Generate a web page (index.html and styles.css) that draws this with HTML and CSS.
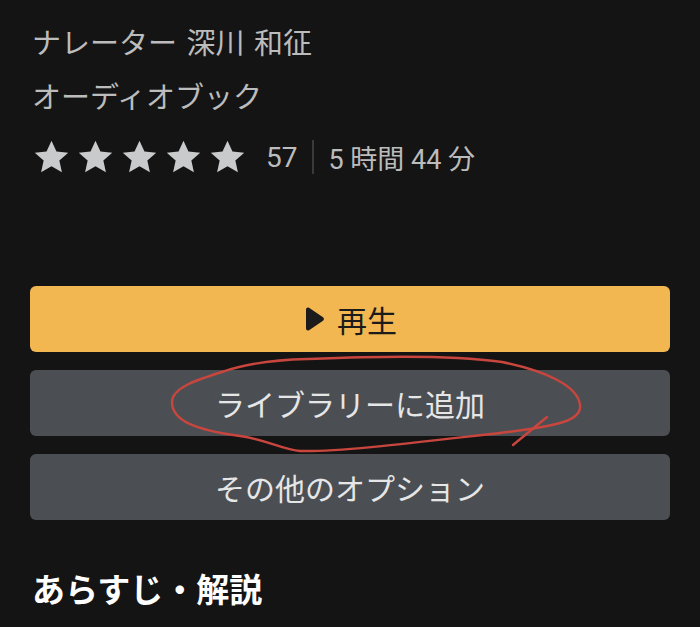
FILE: index.html
```html
<!DOCTYPE html>
<html lang="ja">
<head>
    <meta charset="UTF-8">
    <meta name="viewport" content="width=device-width, initial-scale=1.0">
    <title>オーディオブック</title>
    <link rel="stylesheet" href="styles.css">
</head>
<body>
    <div class="page">
        <div class="meta">
            <p class="meta-line">ナレーター 深川 和征</p>
            <p class="meta-line">オーディオブック</p>
            <div class="rating">
                <div class="stars">
                    <svg viewBox="0 0 24 24"><path d="M12 2.2l2.9 6.3 6.9.7-5.2 4.6 1.5 6.8L12 17.1 5.9 20.6l1.5-6.8L2.2 9.2l6.9-.7z"/></svg>
                    <svg viewBox="0 0 24 24"><path d="M12 2.2l2.9 6.3 6.9.7-5.2 4.6 1.5 6.8L12 17.1 5.9 20.6l1.5-6.8L2.2 9.2l6.9-.7z"/></svg>
                    <svg viewBox="0 0 24 24"><path d="M12 2.2l2.9 6.3 6.9.7-5.2 4.6 1.5 6.8L12 17.1 5.9 20.6l1.5-6.8L2.2 9.2l6.9-.7z"/></svg>
                    <svg viewBox="0 0 24 24"><path d="M12 2.2l2.9 6.3 6.9.7-5.2 4.6 1.5 6.8L12 17.1 5.9 20.6l1.5-6.8L2.2 9.2l6.9-.7z"/></svg>
                    <svg viewBox="0 0 24 24"><path d="M12 2.2l2.9 6.3 6.9.7-5.2 4.6 1.5 6.8L12 17.1 5.9 20.6l1.5-6.8L2.2 9.2l6.9-.7z"/></svg>
                </div>
                <span class="count">57</span>
                <span class="divider"></span>
                <span class="length">5 時間 44 分</span>
            </div>
        </div>

        <!-- Actions -->
        <div class="actions">
            <button class="btn btn-play">
                <svg class="play-icon" viewBox="0 0 22 24"><path d="M3 2.5c0-1.6 1.7-2.5 3-1.7l14 9.5c1.2.8 1.2 2.6 0 3.4L6 23.2c-1.3.8-3-.1-3-1.7z"/></svg>
                再生
            </button>
            <button class="btn btn-grey">ライブラリーに追加</button>
            <button class="btn btn-grey">その他のオプション</button>
        </div>

        <h2 class="section-title">あらすじ・解説</h2>
    </div>

    <!-- hand-drawn mark on top of the screenshot -->
    <svg class="scribble" viewBox="0 0 700 627" width="700" height="627">
        <path d="M307 359C270 360 242 365 222 372C196 380 172 388 172 402C172 421 196 430 240 436C268 440 283 450 300 451C340 452 420 442 500 433C560 426 582 420 580 405C578 386 546 371 502 362C442 354 362 357 307 359Z"/>
        <path d="M513 445L547 417"/>
    </svg>
</body>
</html>
```

FILE: styles.css
```css
body {
    margin: 0;
    padding: 0;
    background-color: #141414;
    font-family: "Noto Sans CJK JP", "Noto Sans", sans-serif;
    position: relative;
    overflow: hidden;
}

.page {
    padding: 14px 30px 0 30px;
}

.meta-line {
    margin: 0;
    font-size: 29px;
    line-height: 54px;
    color: #bcbcbc;
    padding-left: 2px;
    word-spacing: 3px;
}

.rating {
    display: flex;
    align-items: center;
    height: 54px;
    margin-top: 8px;
    padding-left: 1px;
    color: #bcbcbc;
}

.stars {
    display: flex;
    gap: 3px;
}

.stars svg {
    width: 41px;
    height: 41px;
    fill: #c9cacb;
}

.count {
    margin-left: 18px;
    font-family: Roboto, "Noto Sans", sans-serif;
    font-size: 28px;
}

.divider {
    width: 2px;
    height: 34px;
    background-color: #3a3a3a;
    margin: 0 14px 0 15px;
}

.length {
    font-size: 27px;
    font-family: Roboto, "Noto Sans CJK JP", sans-serif;
}

.actions {
    display: flex;
    flex-direction: column;
    gap: 18px;
    margin-top: 102px;
}

.btn {
    display: flex;
    align-items: center;
    justify-content: center;
    gap: 12px;
    height: 66px;
    width: 100%;
    border: none;
    border-radius: 6px;
    font-family: "Noto Sans CJK JP", sans-serif;
    font-size: 30px;
    padding: 0;
}

.btn-play {
    background-color: #f2b750;
    color: #1b1b1b;
}

.play-icon {
    width: 22px;
    height: 24px;
    fill: #1b1b1b;
}

.btn-grey {
    background-color: #4b4f53;
    color: #e6e6e6;
}

.section-title {
    margin: 46px 0 0 2px;
    font-size: 33px;
    font-weight: bold;
    color: #ffffff;
    line-height: 44px;
}

.scribble {
    position: absolute;
    top: 0;
    left: 0;
    pointer-events: none;
}

.scribble path {
    fill: none;
    stroke: #c8463e;
    stroke-width: 2.4;
    stroke-linecap: round;
}
```
